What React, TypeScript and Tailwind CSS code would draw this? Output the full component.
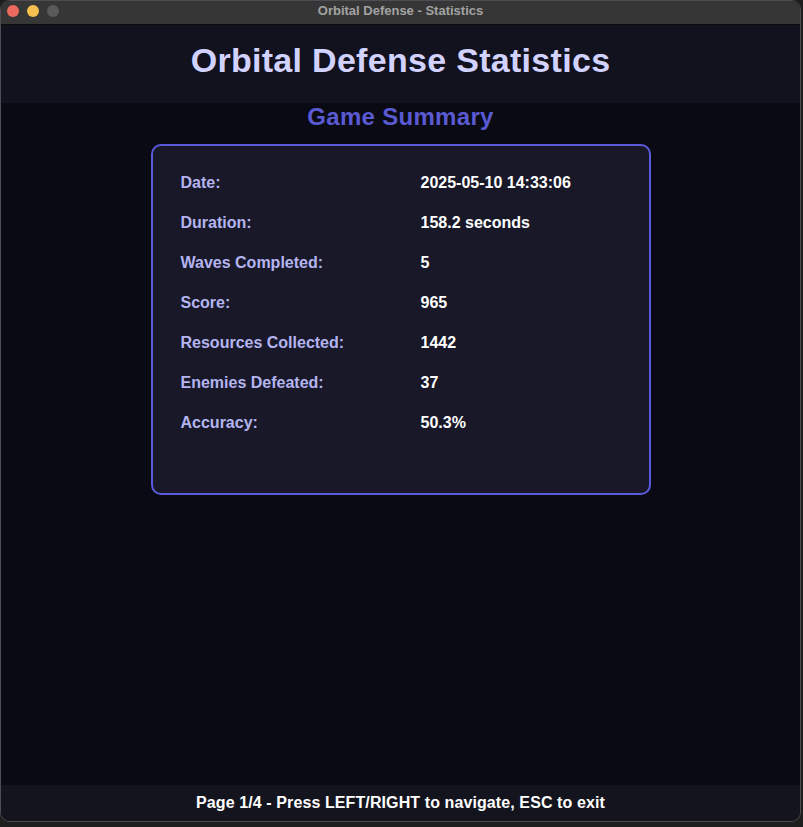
import type { ReactElement } from "react";

const stats = [
  { label: "Date:", value: "2025-05-10 14:33:06" },
  { label: "Duration:", value: "158.2 seconds" },
  { label: "Waves Completed:", value: "5" },
  { label: "Score:", value: "965" },
  { label: "Resources Collected:", value: "1442" },
  { label: "Enemies Defeated:", value: "37" },
  { label: "Accuracy:", value: "50.3%" },
];

function TitleBar(): ReactElement {
  return (
    <div className="relative flex h-[24px] shrink-0 items-center justify-center border-b border-[#0c0c0c] bg-[#363636] pb-[4px]">
      <div className="absolute left-[6px] top-[4px] flex gap-[8px]">
        <span className="h-[12px] w-[12px] rounded-full bg-[#ed6a5e]" />
        <span className="h-[12px] w-[12px] rounded-full bg-[#f5bf4f]" />
        <span className="h-[12px] w-[12px] rounded-full bg-[#5a5a5a]" />
      </div>
      <span className="text-[13px] font-bold text-[#a3a3a3]">Orbital Defense - Statistics</span>
    </div>
  );
}

export default function App(): ReactElement {
  return (
    <div
      className="h-[827px] w-[803px] bg-[#1e1e1e]"
      style={{ fontFamily: '"Liberation Sans", Arial, sans-serif' }}
    >
      <div className="flex h-[822px] w-[801px] flex-col overflow-hidden rounded-[10px] border border-[#4e4e52] bg-[#0a0a14]">
        <TitleBar />

        <header className="h-[78px] shrink-0 bg-[#12121e] pt-[15px] text-center">
          <h1 className="text-[34px] font-bold leading-[40px] tracking-[0.3px] text-[#d2d2ff]">
            Orbital Defense Statistics
          </h1>
        </header>

        <main className="flex flex-1 flex-col items-center">
          <h2 className="mt-[1px] text-[24px] font-bold leading-[26px] tracking-[0.3px] text-[#5a5ad2]">
            Game Summary
          </h2>
          <section className="mt-[14px] w-[500px] rounded-[10px] border-2 border-[#5a5adc] bg-[#181828] pb-[50px] pl-[28px] pt-[17px]">
            {stats.map((s) => (
              <div key={s.label} className="grid h-10 grid-cols-[240px_1fr] text-[16px] font-bold leading-10">
                <span className="text-[#b4b4f0]">{s.label}</span>
                <span className="text-white">{s.value}</span>
              </div>
            ))}
          </section>
        </main>

        <footer className="flex h-9 shrink-0 items-center justify-center bg-[#14141e] text-[16px] font-bold tracking-[0.1px] text-white">
          Page 1/4 - Press LEFT/RIGHT to navigate, ESC to exit
        </footer>
      </div>
    </div>
  );
}
